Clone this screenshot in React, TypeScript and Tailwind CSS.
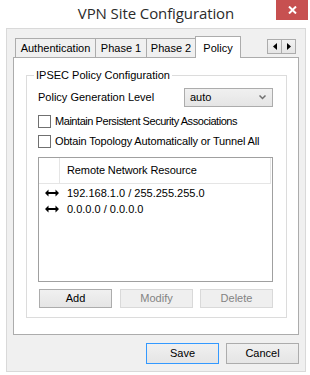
import React from 'react';

const ui = "font-['Liberation_Sans',Arial,sans-serif] text-[11px] text-black";

const Tab: React.FC<{ label: string; w: string; first?: boolean }> = ({ label, w, first }) => (
    <div
        className={`${w} ${first ? '' : '-ml-px'} h-[19px] border border-b-0 border-[#acacac] bg-[#f0f0f0] flex items-center justify-center pt-[1px]`}
    >
        {label}
    </div>
);

const Checkbox: React.FC<{ label: string; track: string }> = ({ label, track }) => (
    <div className="flex items-center h-[13px]">
        <div className="w-[13px] h-[13px] border border-[#707070] bg-white" />
        <span className={`ml-[4px] leading-[13px] ${track}`}>{label}</span>
    </div>
);

const Arrow = () => (
    <svg width="14" height="8" viewBox="0 0 14 8" className="shrink-0">
        <path d="M0 4 L3.5 0.5 L3.5 3 L10.5 3 L10.5 0.5 L14 4 L10.5 7.5 L10.5 5 L3.5 5 L3.5 7.5 Z" fill="#000" />
    </svg>
);

const DialogButton: React.FC<{ label: string; disabled?: boolean; focused?: boolean; w: string; h: string }> = ({
    label,
    disabled,
    focused,
    w,
    h,
}) => (
    <button
        type="button"
        className={`${w} ${h} border font-normal flex items-center justify-center ${
            disabled
                ? 'border-[#d9d9d9] bg-[#efefef] text-[#838383]'
                : focused
                    ? 'border-[#3399ff] bg-gradient-to-b from-[#f0f0f0] to-[#e5e5e5] text-black'
                    : 'border-[#acacac] bg-gradient-to-b from-[#f0f0f0] to-[#e5e5e5] text-black'
        }`}
    >
        {label}
    </button>
);

const App: React.FC = () => {
    return (
        <div className={`w-[310px] h-[375px] bg-white overflow-hidden ${ui}`}>
            {/* title bar */}
            <div className="relative h-[28px] flex items-center justify-center">
                <span className="font-['Open_Sans',sans-serif] text-[15px] tracking-[-0.1px] text-[#2b2b2b] pl-[2px] pb-[1px]">
                    VPN Site Configuration
                </span>
                <div className="absolute top-0 right-[2px] w-[32px] h-[20px] bg-[#c75050] flex items-center justify-center">
                    <svg width="9" height="8" viewBox="0 0 9 8">
                        <path d="M1 0.5 L8 7.5 M8 0.5 L1 7.5" stroke="#fff" strokeWidth="2" />
                    </svg>
                </div>
            </div>

            {/* client area */}
            <div className="ml-[6px] w-[300px] h-[344px] border border-[#d9d9d9] bg-[#f0f0f0] pt-[8px] pl-[6px]">
                {/* tab strip */}
                <div className="w-[285px] h-[20px] flex items-end pl-[2px]">
                    <Tab label="Authentication" w="w-[81px]" first />
                    <Tab label="Phase 1" w="w-[52px]" />
                    <Tab label="Phase 2" w="w-[50px]" />
                    <div className="-ml-px relative z-10 w-[46px] h-[22px] -mb-px border border-b-0 border-[#acacac] bg-white flex items-start justify-center pt-[3px]">
                        Policy
                    </div>
                    <div className="ml-auto mr-[2px] self-start mt-[2px] flex">
                        <div className="w-[15px] h-[15px] border border-[#acacac] bg-gradient-to-b from-[#f2f2f2] to-[#e5e5e5] flex items-center justify-center">
                            <svg width="4" height="7" viewBox="0 0 4 7">
                                <path d="M4 0 L0 3.5 L4 7 Z" fill="#000" />
                            </svg>
                        </div>
                        <div className="-ml-px w-[15px] h-[15px] border border-[#acacac] bg-gradient-to-b from-[#f2f2f2] to-[#e5e5e5] flex items-center justify-center">
                            <svg width="4" height="7" viewBox="0 0 4 7">
                                <path d="M0 0 L4 3.5 L0 7 Z" fill="#000" />
                            </svg>
                        </div>
                    </div>
                </div>

                {/* tab panel */}
                <div className="w-[286px] h-[278px] border border-[#acacac] bg-white pt-[17px] pl-[12px]">
                    <div className="relative w-[261px] h-[243px] border border-[#dcdcdc] pl-[11px] pr-[13px] pt-[12px]">
                        <span className="absolute -top-[8px] left-[7px] bg-white px-[2px] leading-[14px]">
                            IPSEC Policy Configuration
                        </span>

                        <div className="flex items-center h-[19px]">
                            <span>Policy Generation Level</span>
                            <div className="ml-auto w-[89px] h-[19px] border border-[#acacac] bg-gradient-to-b from-[#f0f0f0] to-[#e5e5e5] flex items-center pl-[5px] pr-[6px]">
                                <span className="flex-1">auto</span>
                                <svg width="7" height="5" viewBox="0 0 7 5">
                                    <path d="M0.5 0.5 L3.5 3.5 L6.5 0.5" stroke="#707070" strokeWidth="1.5" fill="none" />
                                </svg>
                            </div>
                        </div>

                        <div className="mt-[8px] flex flex-col gap-[7px]">
                            <Checkbox label="Maintain Persistent Security Associations" track="tracking-[-0.45px]" />
                            <Checkbox label="Obtain Topology Automatically or Tunnel All" track="tracking-[-0.15px]" />
                        </div>

                        {/* list view */}
                        <div className="mt-[9px] w-[235px] h-[125px] border border-[#a0a0a0] bg-white">
                            <div className="flex h-[26px] w-[233px]">
                                <div className="w-[20px] border-b border-[#e5e5e5]" />
                                <div className="w-[212px] border-l border-r border-b border-[#e5e5e5] flex items-center pl-[7px] tracking-[-0.1px]">
                                    Remote Network Resource
                                </div>
                            </div>
                            <div className="flex items-center h-[16px] pl-[6px] mt-[1px]">
                                <Arrow />
                                <span className="ml-[8px]">192.168.1.0 / 255.255.255.0</span>
                            </div>
                            <div className="flex items-center h-[16px] pl-[6px]">
                                <Arrow />
                                <span className="ml-[8px]">0.0.0.0 / 0.0.0.0</span>
                            </div>
                        </div>

                        <div className="mt-[7px] ml-[1px] flex">
                            <DialogButton label="Add" w="w-[73px]" h="h-[19px]" />
                            <div className="ml-[8px]">
                                <DialogButton label="Modify" w="w-[73px]" h="h-[19px]" disabled />
                            </div>
                            <div className="ml-[7px]">
                                <DialogButton label="Delete" w="w-[73px]" h="h-[19px]" disabled />
                            </div>
                        </div>
                    </div>
                </div>

                {/* bottom buttons */}
                <div className="w-[286px] mt-[8px] flex justify-end gap-[7px]">
                    <DialogButton label="Save" w="w-[73px]" h="h-[21px]" focused />
                    <DialogButton label="Cancel" w="w-[73px]" h="h-[21px]" />
                </div>
            </div>
        </div>
    );
};

export default App;
